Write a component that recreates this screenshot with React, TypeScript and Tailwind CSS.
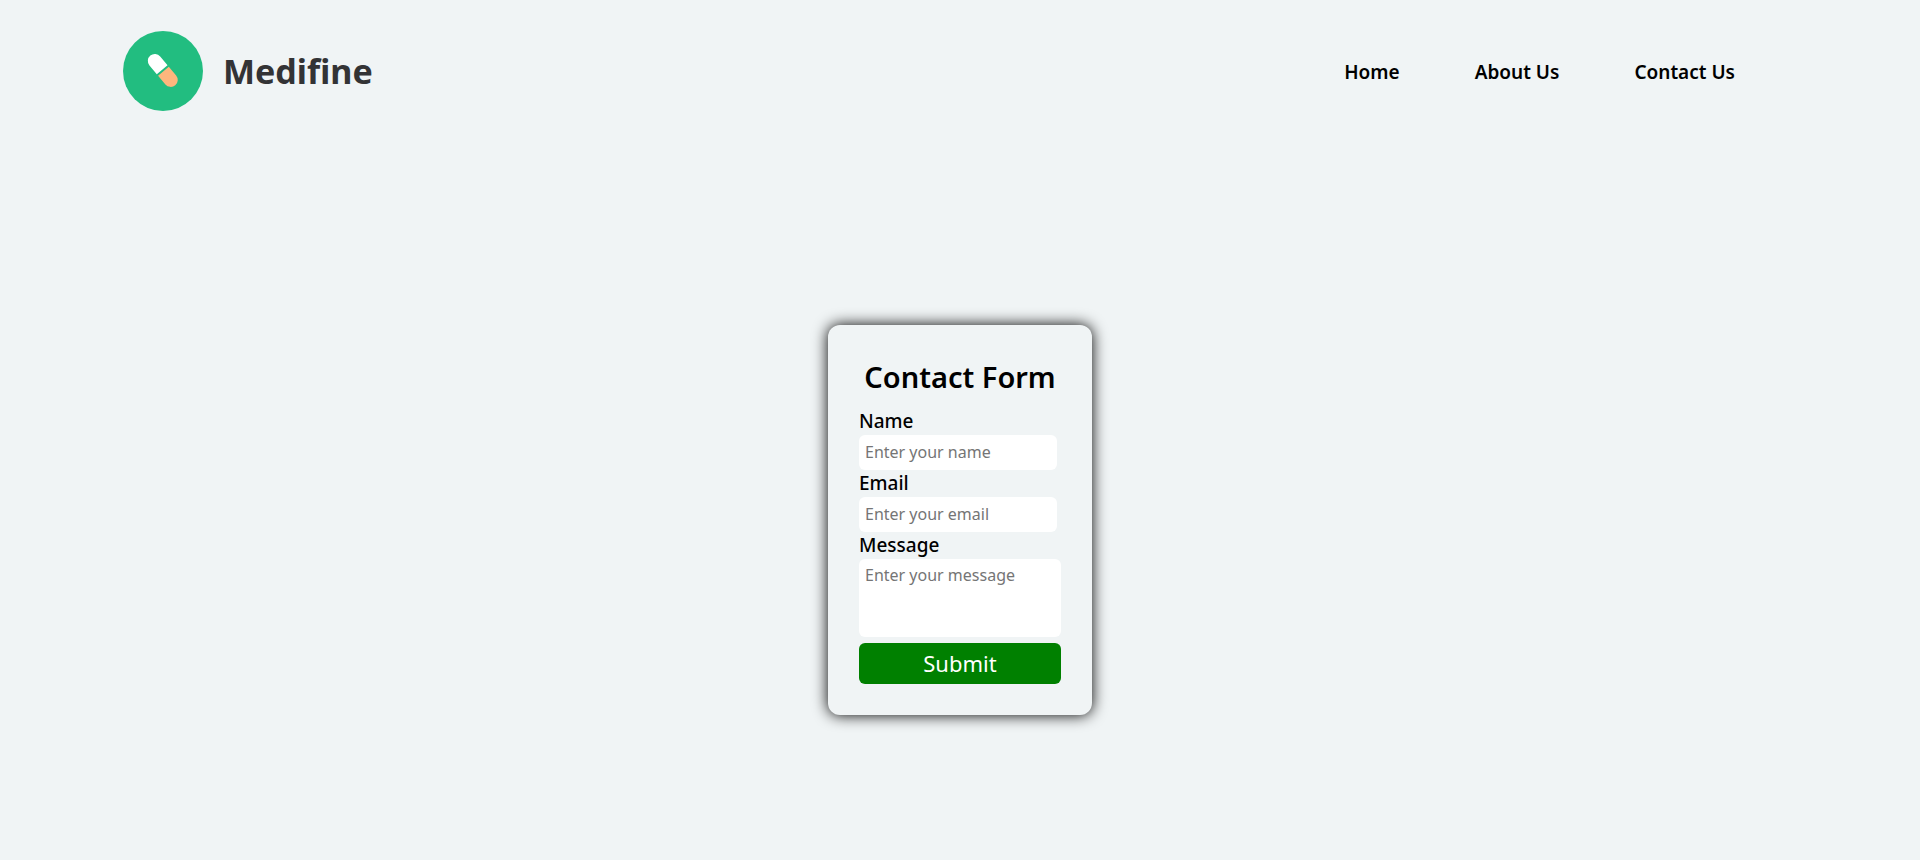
const navItems = ["Home", "About Us", "Contact Us"];

function Logo() {
  return (
    <a href="#home" className="flex items-center gap-5">
      <svg viewBox="0 0 80 80" className="size-20" aria-hidden="true">
        <circle cx="40" cy="40" r="40" fill="#22bd80" />
        <g transform="translate(39.8 39.4) rotate(-40)">
          <path d="M-7 -1V-12.4A7 7 0 0 1 7 -12.4V-1Z" fill="#ffffff" />
          <path d="M-7 1V12.4A7 7 0 0 0 7 12.4V1Z" fill="#fdb67d" />
        </g>
      </svg>
      <span className="text-[34px] leading-none font-bold text-[#333335]">Medifine</span>
    </a>
  );
}

function Header() {
  return (
    <header className="flex items-center justify-between pt-[31px] pr-[185px] pl-[123px]">
      <Logo />
      <nav className="flex gap-[75px] pt-0.5 text-[19px] leading-6 font-semibold">
        {navItems.map((item) => (
          <a key={item} href={`#${item.toLowerCase().replace(" ", "-")}`}>
            {item}
          </a>
        ))}
      </nav>
    </header>
  );
}

const fieldClass =
  "block rounded-md bg-white px-1.5 text-base text-black outline-none placeholder:text-[#757575]";
const inputClass = `${fieldClass} h-[35px] w-[198px] pb-0.5`;
const labelClass = "block text-[19px] leading-[27px] font-medium";

function ContactForm() {
  return (
    <form className="rounded-xl bg-[#f0f4f5] p-[31px] shadow-[0_0_15px_#000000]">
      <h1 className="mb-2.5 text-center text-[29px] leading-[42px] font-semibold">Contact Form</h1>
      <label htmlFor="name" className={labelClass}>Name</label>
      <input id="name" type="text" placeholder="Enter your name" className={inputClass} />
      <label htmlFor="email" className={labelClass}>Email</label>
      <input id="email" type="email" placeholder="Enter your email" className={inputClass} />
      <label htmlFor="message" className={labelClass}>Message</label>
      <textarea
        id="message"
        placeholder="Enter your message"
        className={`${fieldClass} mb-1.5 h-[78px] w-[202px] resize-none py-1.5 leading-[21px]`}
      />
      <button type="submit" className="block h-[41px] w-full rounded-md bg-[#008000] pb-0.5 text-[22px] leading-7 text-white">
        Submit
      </button>
    </form>
  );
}

export default function App() {
  return (
    <div className="min-h-screen bg-[#f0f4f5] font-['Noto_Sans',sans-serif] text-black">
      <Header />
      <main className="flex justify-center pt-[214px] pb-16">
        <ContactForm />
      </main>
    </div>
  );
}
